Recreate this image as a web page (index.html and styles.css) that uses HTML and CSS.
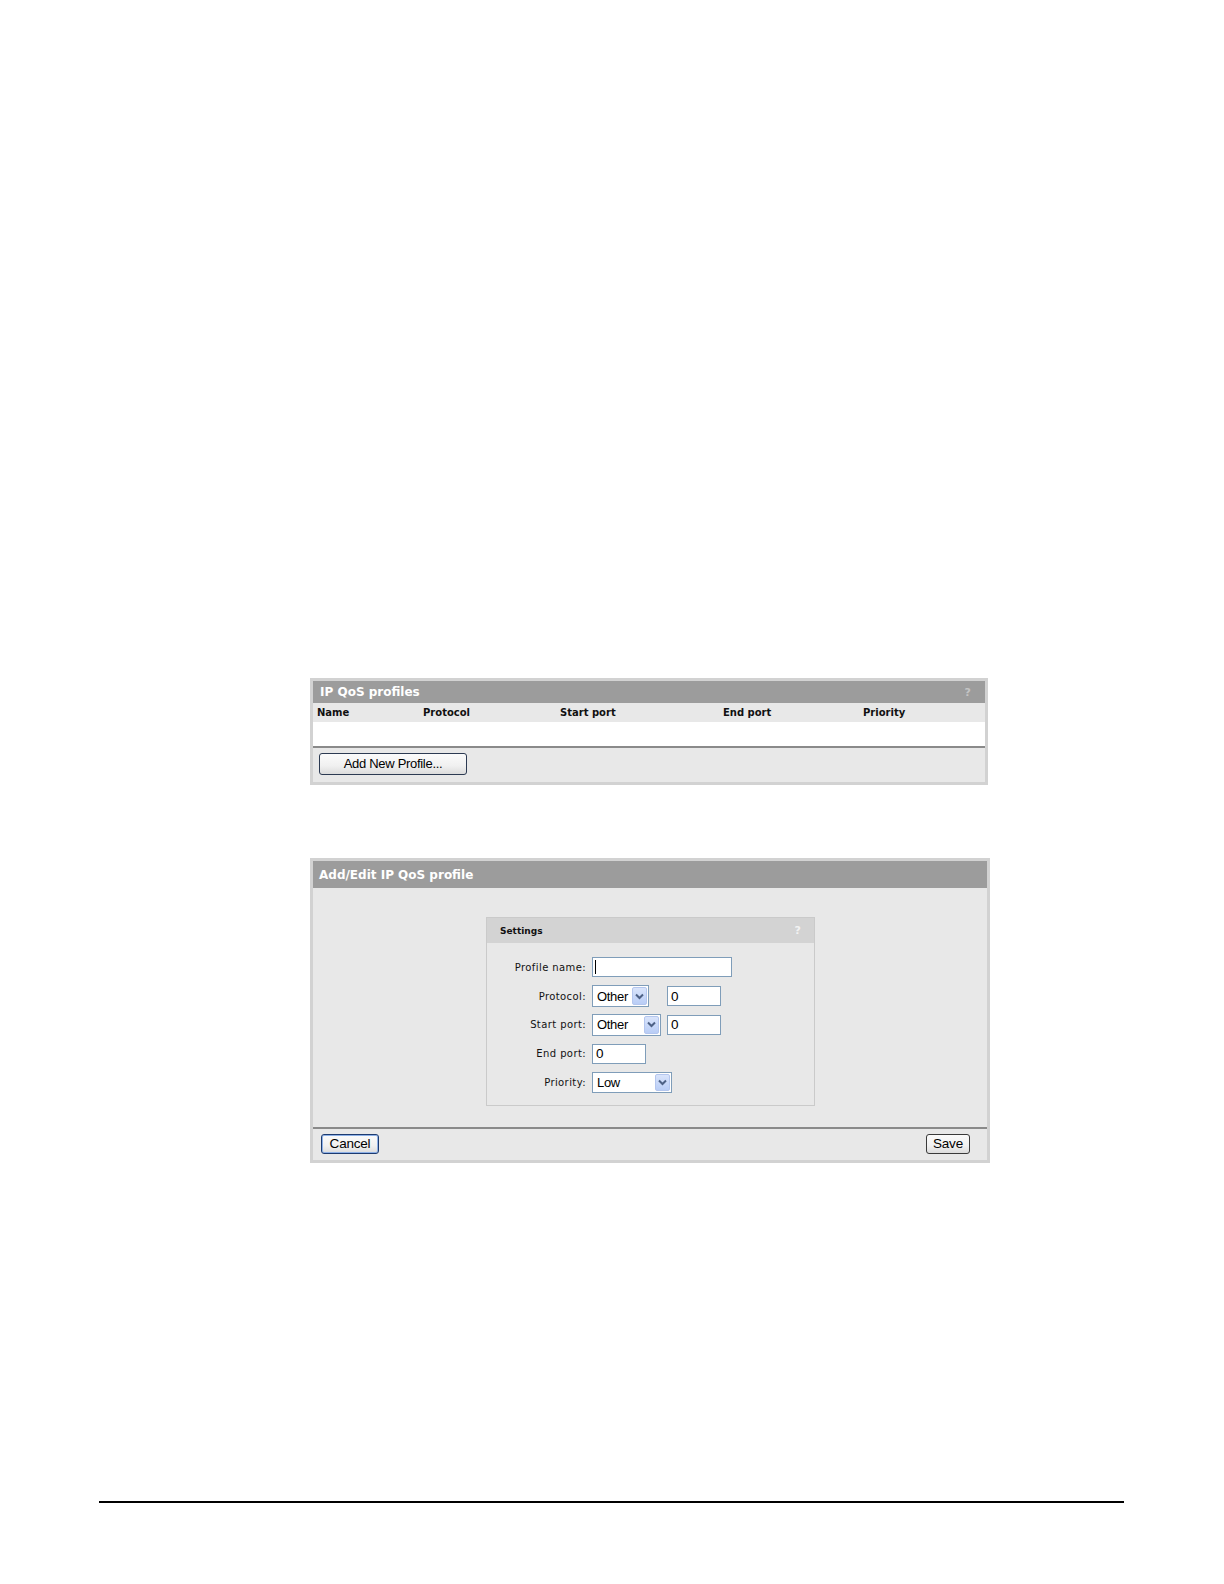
FILE: index.html
```html
<!DOCTYPE html>
<html>
<head>
<meta charset="utf-8">
<title>IP QoS profiles</title>
<link rel="stylesheet" href="styles.css">
</head>
<body>
<div class="page">
  <div class="panel panel-list">
    <div class="panel-head"><span class="panel-title">IP QoS profiles</span><span class="help">?</span></div>
    <div class="cols">
      <span class="col c1">Name</span>
      <span class="col c2">Protocol</span>
      <span class="col c3">Start port</span>
      <span class="col c4">End port</span>
      <span class="col c5">Priority</span>
    </div>
    <div class="rows"></div>
    <div class="panel-foot foot-list">
      <button class="btn btn-add">Add New Profile...</button>
    </div>
  </div>

  <div class="panel panel-edit">
    <div class="panel-head head-edit"><span class="panel-title">Add/Edit IP QoS profile</span></div>
    <div class="edit-body">
      <div class="settings">
        <div class="settings-head"><span>Settings</span><span class="help help-s">?</span></div>
        <div class="settings-grid">
          <span class="lbl">Profile name:</span>
          <span class="field"><span class="input w-name"><span class="caret"></span></span></span>

          <span class="lbl">Protocol:</span>
          <span class="field">
            <span class="select w-proto"><span class="sel-text">Other</span><span class="arrow"><svg width="9" height="7" viewBox="0 0 9 7"><path d="M1 1.5 L4.5 5 L8 1.5" fill="none" stroke="#4d6185" stroke-width="2"/></svg></span></span>
            <span class="input w-num gap-wide">0</span>
          </span>

          <span class="lbl">Start port:</span>
          <span class="field">
            <span class="select w-start"><span class="sel-text">Other</span><span class="arrow"><svg width="9" height="7" viewBox="0 0 9 7"><path d="M1 1.5 L4.5 5 L8 1.5" fill="none" stroke="#4d6185" stroke-width="2"/></svg></span></span>
            <span class="input w-num gap-narrow">0</span>
          </span>

          <span class="lbl">End port:</span>
          <span class="field"><span class="input w-num">0</span></span>

          <span class="lbl">Priority:</span>
          <span class="field">
            <span class="select w-prio"><span class="sel-text">Low</span><span class="arrow"><svg width="9" height="7" viewBox="0 0 9 7"><path d="M1 1.5 L4.5 5 L8 1.5" fill="none" stroke="#4d6185" stroke-width="2"/></svg></span></span>
          </span>
        </div>
      </div>
    </div>
    <div class="panel-foot foot-edit">
      <button class="btn btn-cancel">Cancel</button>
      <button class="btn btn-save">Save</button>
    </div>
  </div>

  <div class="rule"></div>
</div>
</body>
</html>
```

FILE: styles.css
```css
html, body {
  margin: 0;
  padding: 0;
  background: #ffffff;
}

.page {
  display: flex;
  flex-direction: column;
  padding-top: 678px;
  font-family: "DejaVu Sans", Verdana, sans-serif;
}

.panel {
  box-sizing: border-box;
  margin-left: 310px;
  border: 3px solid #d2d2d2;
  background: #e8e8e8;
}

.panel-list {
  width: 678px;
}

.panel-edit {
  width: 680px;
  margin-top: 73px;
}

.panel-head {
  height: 22px;
  background: #9c9c9c;
  display: flex;
  align-items: center;
  justify-content: space-between;
  padding: 0 14px 0 7px;
}

.head-edit {
  height: 27px;
  padding-left: 6px;
}

.panel-title {
  color: #ffffff;
  font-weight: bold;
  font-size: 12px;
}

.help {
  color: #c4c4c4;
  font-weight: bold;
  font-size: 11px;
}

.cols {
  height: 19px;
  display: grid;
  grid-template-columns: 106px 137px 163px 140px 1fr;
  align-items: center;
  padding-left: 4px;
  background: #e8e8e8;
}

.col {
  font-size: 10px;
  font-weight: bold;
  color: #111111;
}

.rows {
  height: 24px;
  background: #ffffff;
}

.panel-foot {
  border-top: 2px solid #8a8a8a;
  display: flex;
  align-items: flex-start;
  justify-content: space-between;
  box-sizing: border-box;
}

.foot-list {
  height: 36px;
  padding: 5px 6px 0 6px;
}

.foot-edit {
  height: 33px;
  padding: 5px 17px 0 8px;
}

.btn {
  font-family: "Liberation Sans", Arial, sans-serif;
  font-size: 13px;
  letter-spacing: -0.2px;
  color: #000000;
  background: linear-gradient(#fbfbfb, #f0f0f0 60%, #dcdcdc);
  border: 1px solid #2c3a52;
  border-radius: 3px;
  padding: 0;
  margin: 0;
  line-height: 18px;
}

.btn-add {
  width: 148px;
  height: 22px;
  line-height: 20px;
  letter-spacing: -0.3px;
}

.btn-cancel {
  width: 58px;
  height: 20px;
  font-size: 13.5px;
  border-color: #1d3b70;
  box-shadow: inset 0 0 0 1px #8db0e6;
}

.btn-save {
  width: 44px;
  height: 20px;
  font-size: 13.5px;
  border-color: #3a3a3a;
}

.edit-body {
  height: 239px;
  box-sizing: border-box;
  padding-top: 29px;
  padding-left: 173px;
  background: #e8e8e8;
}

.settings {
  width: 329px;
  box-sizing: border-box;
  border: 1px solid #cacaca;
  background: #e8e8e8;
}

.settings-head {
  height: 25px;
  background: #d3d3d3;
  display: flex;
  align-items: center;
  justify-content: space-between;
  padding: 0 13px 0 13px;
  font-size: 9px;
  font-weight: bold;
  color: #111111;
}

.help-s {
  font-size: 11px;
  color: #f2f2f2;
}

.settings-grid {
  display: grid;
  grid-template-columns: 98px 1fr;
  grid-auto-rows: 28.8px;
  column-gap: 7px;
  align-items: center;
  padding: 10px 0 8px 0;
}

.lbl {
  text-align: right;
  font-size: 10px;
  letter-spacing: 0.4px;
  color: #111111;
  margin-right: -1px;
}

.field {
  display: flex;
  align-items: center;
}

.input, .select {
  box-sizing: border-box;
  background: #ffffff;
  border: 1px solid #7f9db9;
  font-family: "Liberation Sans", Arial, sans-serif;
  font-size: 13.5px;
  letter-spacing: -0.2px;
  color: #000000;
  display: flex;
  align-items: center;
}

.input {
  height: 20px;
  padding-left: 3px;
}

.w-name { width: 140px; }
.w-num { width: 54px; }
.gap-wide { margin-left: 18px; }
.gap-narrow { margin-left: 6px; }

.caret {
  width: 1px;
  height: 14px;
  background: #000000;
  margin-left: -1px;
}

.select {
  height: 22px;
  padding: 1px;
  justify-content: space-between;
  font-size: 13px;
  letter-spacing: -0.3px;
}

.w-proto { width: 57px; }
.w-start { width: 69px; }
.w-prio { width: 80px; height: 21px; }

.sel-text {
  padding-left: 3px;
}

.arrow {
  box-sizing: border-box;
  width: 15px;
  height: 100%;
  background: linear-gradient(#d9e4fb, #b9cdf6);
  border: 1px solid #b4c6ee;
  border-radius: 2px;
  display: flex;
  align-items: center;
  justify-content: center;
}

.rule {
  margin-top: 338px;
  margin-left: 99px;
  width: 1025px;
  height: 2px;
  background: #000000;
}
```
